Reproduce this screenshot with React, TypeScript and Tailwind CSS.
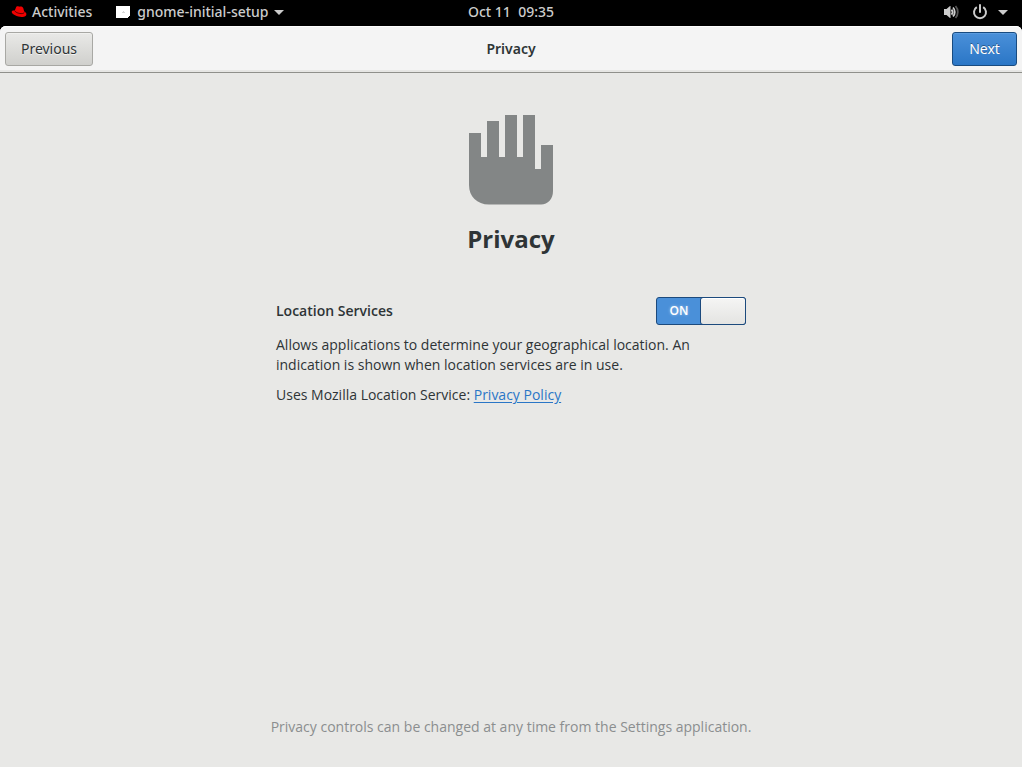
import { useState } from 'react'

const FONT = "font-['Noto_Sans','Open_Sans',sans-serif]"

function RedHatIcon() {
  return (
    <svg width="16" height="14" viewBox="0 0 16 14" aria-hidden="true">
      <path d="M3.800 5.600 5 2.400C5.300 1.400 6.200 1 7.100 1.300l.8.3c.5.1.8 0 1.300-.1 1.400-.2 2.700.5 3.100 1.800l.9 3.300c1.300.6 2.200 1.500 2.200 2.700 0 2.100-2.200 2.900-4.700 2.700C6.500 11.600.700 9.200.700 6.900c0-1.200 1.600-1.500 3.100-1.300z" fill="#f00000" />
      <path d="M3.900 5.900c.8 1.900 5.900 3.400 8.500 2.400.5-.2.8-.6.8-1" fill="none" stroke="#400000" strokeWidth="0.900" />
    </svg>
  )
}

function WindowIcon() {
  return (
    <svg width="14" height="12" viewBox="0 0 14 12" aria-hidden="true">
      <path d="M0 0h14v10h-1v1h-1v1H0z" fill="#fff" />
      <path d="M6 6h1V5h1v1h1v1H6z" fill="#d8d8d8" />
    </svg>
  )
}

function CaretIcon() {
  return (
    <svg width="10" height="5" viewBox="0 0 10 5" aria-hidden="true">
      <path d="M0 0h10L5 5z" fill="#ccc" />
    </svg>
  )
}

function VolumeIcon() {
  return (
    <svg width="16" height="16" viewBox="0 0 16 16" fill="none" aria-hidden="true">
      <path d="M0 5h2.500L6 2h.5v12H6l-3.500-3H0z" fill="#ccc" />
      <path d="M7.500 5.500a3.600 3.600 0 0 1 0 5" stroke="#ccc" strokeWidth="1.800" />
      <path d="M9 3.500a6.500 6.500 0 0 1 0 9" stroke="#ccc" strokeWidth="1.800" />
      <path d="M11.500 2a9 9 0 0 1 0 12" stroke="#555" strokeWidth="1.800" />
    </svg>
  )
}

function PowerIcon() {
  return (
    <svg width="16" height="16" viewBox="0 0 16 16" fill="none" stroke="#ccc" strokeWidth="2" aria-hidden="true">
      <path d="M4.800 3.100a6 6 0 1 0 6.400 0" />
      <path d="M8 1v7" strokeLinecap="round" />
    </svg>
  )
}

function HandIcon() {
  return (
    <svg width="85" height="91" viewBox="0 0 85 91" aria-hidden="true">
      <path d="M0 19h12v24h6V7h12v36h6V1h12v42h6V1h12v54h6V31h12v46c0 8-5 13.500-12 13.500H20C8 90.500 0 82.500 0 71z" fill="#838686" />
    </svg>
  )
}

function TopBar() {
  return (
    <nav className="grid h-[26px] grid-cols-[1fr_auto_1fr] items-start bg-black text-sm font-medium text-[#ccc]">
      <div className="flex h-6 items-center gap-6 pl-[11px]">
        <button type="button" className="flex items-center gap-[5px]"><RedHatIcon />Activities</button>
        <button type="button" className="flex items-center gap-[5px]">
          <WindowIcon />
          <span className="pl-0.5">gnome-initial-setup</span>
          <CaretIcon />
        </button>
      </div>
      <button type="button" className="h-6 whitespace-pre">Oct 11  09:35</button>
      <button type="button" aria-label="System menu" className="flex h-6 items-center gap-[10px] justify-self-end pr-[14px]">
        <span className="flex gap-3"><VolumeIcon /><PowerIcon /></span>
        <CaretIcon />
      </button>
    </nav>
  )
}

function HeaderBar() {
  return (
    <header className="grid h-[47px] grid-cols-[1fr_auto_1fr] items-center rounded-t-md border-b border-[#8f908b] bg-[#f4f4f4] px-[5px] text-sm shadow-[inset_0_1px_#fff,inset_0_-2px_#e6e6e4]">
      <button type="button" className="h-[34px] min-w-[88px] justify-self-start rounded-[3px] border border-[#a8a8a4] bg-linear-to-b from-[#e9e9e7] to-[#d0d0cd] px-3 text-[#2e3436] shadow-[inset_0_1px_#f0f0ee] text-shadow-[0_1px_#ffffffb0]">
        Previous
      </button>
      <h1 className="font-semibold text-[#2e3436]">Privacy</h1>
      <button type="button" className="h-[34px] min-w-[65px] justify-self-end rounded-[3px] border border-[#184b80] bg-linear-to-b from-[#4a90d9] to-[#2a76c6] px-3 text-white shadow-[inset_0_1px_#5b9cdf] text-shadow-[0_-1px_#00000060]">
        Next
      </button>
    </header>
  )
}

function Switch({ id, checked, onChange }: { id: string; checked: boolean; onChange: (v: boolean) => void }) {
  return (
    <label htmlFor={id} className="relative grid h-7 w-[90px] cursor-pointer grid-cols-2 rounded-[3px] border border-[#1c4a7d] bg-[#4a90d9] text-xs font-semibold text-white has-focus-visible:outline-2">
      <input id={id} type="checkbox" role="switch" aria-label="Location Services" checked={checked}
        onChange={e => onChange(e.target.checked)} className="absolute inset-0 m-0 cursor-pointer opacity-0" />
      {checked && <span className="flex items-center justify-center text-shadow-[0_0_3px_#ffffff80]">ON</span>}
      <span className="-m-px rounded-[3px] border border-[#1c4a7d] bg-linear-to-b from-[#f5f5f4] to-[#e4e4e2] shadow-[inset_0_1px_#fff]" />
      {!checked && <span className="flex items-center justify-center">OFF</span>}
    </label>
  )
}

export default function App() {
  const [location, setLocation] = useState(true)

  return (
    <div className={`flex min-h-screen flex-col bg-black ${FONT}`}>
      <TopBar />
      <div className="flex flex-1 flex-col rounded-t-md bg-[#e8e8e6] text-[#2e3436]">
        <HeaderBar />
        <main className="mx-auto flex w-full max-w-[470px] flex-1 flex-col pt-[41px] pb-[30px] font-['Open_Sans','Noto_Sans',sans-serif]">
          <div className="flex flex-col items-center gap-4">
            <HandIcon />
            <h2 className="text-2xl leading-9 font-bold">Privacy</h2>
          </div>
          <section className="mt-10 text-sm leading-5">
            <div className="flex items-center justify-between">
              <h3 className="font-semibold">Location Services</h3>
              <Switch id="location" checked={location} onChange={setLocation} />
            </div>
            <p className="mt-[10px] max-w-[424px]">
              Allows applications to determine your geographical location. An indication is shown when location services are in use.
            </p>
            <p className="mt-[10px]">
              Uses Mozilla Location Service: <a href="#privacy-policy" className="text-[#2a76c6] underline underline-offset-2">Privacy Policy</a>
            </p>
          </section>
          <p className="mt-auto self-center text-sm leading-5 whitespace-nowrap text-[#8b8e8f]">
            Privacy controls can be changed at any time from the Settings application.
          </p>
        </main>
      </div>
    </div>
  )
}
